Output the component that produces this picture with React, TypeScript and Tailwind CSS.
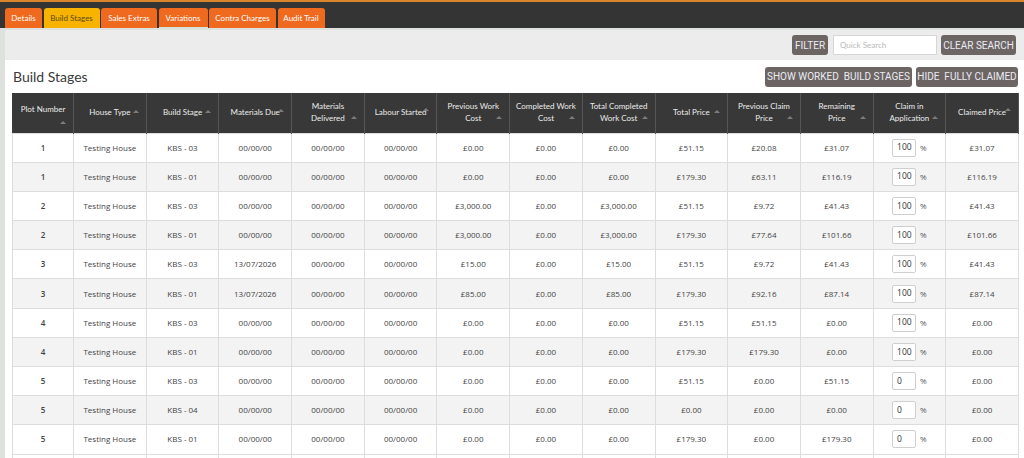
import React from 'react';

type Row = {
  plot: string;
  stage: string;
  due: string;
  prev: string;
  completed: string;
  totalCompleted: string;
  total: string;
  prevClaim: string;
  remaining: string;
  claim: string;
  claimed: string;
};

const rows: Row[] = [
  { plot: '1', stage: 'KBS - 03', due: '00/00/00', prev: '£0.00', completed: '£0.00', totalCompleted: '£0.00', total: '£51.15', prevClaim: '£20.08', remaining: '£31.07', claim: '100', claimed: '£31.07' },
  { plot: '1', stage: 'KBS - 01', due: '00/00/00', prev: '£0.00', completed: '£0.00', totalCompleted: '£0.00', total: '£179.30', prevClaim: '£63.11', remaining: '£116.19', claim: '100', claimed: '£116.19' },
  { plot: '2', stage: 'KBS - 03', due: '00/00/00', prev: '£3,000.00', completed: '£0.00', totalCompleted: '£3,000.00', total: '£51.15', prevClaim: '£9.72', remaining: '£41.43', claim: '100', claimed: '£41.43' },
  { plot: '2', stage: 'KBS - 01', due: '00/00/00', prev: '£3,000.00', completed: '£0.00', totalCompleted: '£3,000.00', total: '£179.30', prevClaim: '£77.64', remaining: '£101.66', claim: '100', claimed: '£101.66' },
  { plot: '3', stage: 'KBS - 03', due: '13/07/2026', prev: '£15.00', completed: '£0.00', totalCompleted: '£15.00', total: '£51.15', prevClaim: '£9.72', remaining: '£41.43', claim: '100', claimed: '£41.43' },
  { plot: '3', stage: 'KBS - 01', due: '13/07/2026', prev: '£85.00', completed: '£0.00', totalCompleted: '£85.00', total: '£179.30', prevClaim: '£92.16', remaining: '£87.14', claim: '100', claimed: '£87.14' },
  { plot: '4', stage: 'KBS - 03', due: '00/00/00', prev: '£0.00', completed: '£0.00', totalCompleted: '£0.00', total: '£51.15', prevClaim: '£51.15', remaining: '£0.00', claim: '100', claimed: '£0.00' },
  { plot: '4', stage: 'KBS - 01', due: '00/00/00', prev: '£0.00', completed: '£0.00', totalCompleted: '£0.00', total: '£179.30', prevClaim: '£179.30', remaining: '£0.00', claim: '100', claimed: '£0.00' },
  { plot: '5', stage: 'KBS - 03', due: '00/00/00', prev: '£0.00', completed: '£0.00', totalCompleted: '£0.00', total: '£51.15', prevClaim: '£0.00', remaining: '£51.15', claim: '0', claimed: '£0.00' },
  { plot: '5', stage: 'KBS - 04', due: '00/00/00', prev: '£0.00', completed: '£0.00', totalCompleted: '£0.00', total: '£0.00', prevClaim: '£0.00', remaining: '£0.00', claim: '0', claimed: '£0.00' },
  { plot: '5', stage: 'KBS - 01', due: '00/00/00', prev: '£0.00', completed: '£0.00', totalCompleted: '£0.00', total: '£179.30', prevClaim: '£0.00', remaining: '£179.30', claim: '0', claimed: '£0.00' },
];

// label, arrow top offset (px)
const columns: { label: React.ReactNode; arrowTop: number }[] = [
  { label: 'Plot Number', arrowTop: 28 },
  { label: 'House Type', arrowTop: 17 },
  { label: 'Build Stage', arrowTop: 17 },
  { label: 'Materials Due', arrowTop: 16 },
  { label: <>Materials<br />Delivered</>, arrowTop: 23 },
  { label: 'Labour Started', arrowTop: 15 },
  { label: <>Previous Work<br />Cost</>, arrowTop: 23 },
  { label: <>Completed Work<br />Cost</>, arrowTop: 23 },
  { label: <>Total Completed<br />Work Cost</>, arrowTop: 23 },
  { label: 'Total Price', arrowTop: 17 },
  { label: <>Previous Claim<br />Price</>, arrowTop: 23 },
  { label: <>Remaining<br />Price</>, arrowTop: 23 },
  { label: <>Claim in<br />Application</>, arrowTop: 23 },
  { label: 'Claimed Price', arrowTop: 15 },
];

const tabs = [
  { label: 'Details', w: 'w-[37px]' },
  { label: 'Build Stages', w: 'w-[56px]', active: true },
  { label: 'Sales Extras', w: 'w-[56px]' },
  { label: 'Variations', w: 'w-[49px]', underline: true },
  { label: 'Contra Charges', w: 'w-[67px]' },
  { label: 'Audit Trail', w: 'w-[47px]' },
];

function SortArrow({ top }: { top: number }) {
  return (
    <span
      className="absolute right-[7px] w-0 h-0 border-l-[3px] border-r-[3px] border-b-[3px] border-l-transparent border-r-transparent border-b-[#7c7c7c]"
      style={{ top }}
    />
  );
}

function GreyButton({ children, width }: { children: React.ReactNode; width: string }) {
  return (
    <button
      className={`${width} h-[20px] rounded-[3px] bg-[#6d6464] text-[#e9ecf2] text-[10px] font-normal flex items-center justify-center whitespace-pre`}
      style={{ fontFamily: 'Roboto, "Liberation Sans", sans-serif' }}
    >
      {children}
    </button>
  );
}

export default function App() {
  return (
    <div className="w-[1024px] h-[458px] overflow-hidden bg-[#dde2de] relative" style={{ fontFamily: 'Lato, "Open Sans", sans-serif' }}>
      <div className="h-[2px] bg-[#d8862c]" />
      <div className="h-[26px] bg-[#343434] flex items-end pl-[5px] gap-[1.5px]">
        {tabs.map((t) => (
          <div
            key={t.label}
            className={`${t.w} h-[20px] rounded-t-[3px] flex items-center justify-center text-[8px] ${
              t.active ? 'bg-[#f7b300] text-[#5e4a10]' : 'bg-[#ef6a1f] text-white'
            } ${t.underline ? 'border-b border-[#cfe0d4]' : ''}`}
          >
            {t.label}
          </div>
        ))}
      </div>

      <div className="ml-[5px] mt-[2px] bg-white h-full">
        <div className="h-[30px] bg-[#ececec] flex items-center justify-end gap-[4px] pr-[8px]">
          <GreyButton width="w-[36px]">FILTER</GreyButton>
          <div className="w-[104px] h-[20px] bg-white border border-[#d6d6d6] flex items-center px-[6px] text-[8px] text-[#b8b8b8] ml-[1px]">
            Quick Search
          </div>
          <GreyButton width="w-[75px]">CLEAR SEARCH</GreyButton>
        </div>

        <div className="pl-[7px] pr-[6px]">
          <div className="h-[33px] flex items-center justify-between">
            <h1 className="text-[14px] text-[#3a3a3a] pl-[1px]">Build Stages</h1>
            <div className="flex gap-[4px]">
              <GreyButton width="w-[147px]">SHOW WORKED  BUILD STAGES</GreyButton>
              <GreyButton width="w-[102px]">HIDE  FULLY CLAIMED</GreyButton>
            </div>
          </div>

          <table className="w-[1006px] table-fixed border-collapse border-l border-l-[#3a3a3a]">
            <colgroup>
              <col className="w-[61px]" />
              {columns.slice(1).map((_, i) => (
                <col key={i} className="w-[72.7px]" />
              ))}
            </colgroup>
            <thead>
              <tr className="h-[40px] bg-[#383838]">
                {columns.map((c, i) => (
                  <th
                    key={i}
                    className="relative border-r border-[#555555] text-[8px] font-normal leading-[12px] text-[#ececec] text-center px-[4px] pb-[1px]"
                  >
                    <span className={i === 0 ? 'relative -top-[3px]' : ''}>{c.label}</span>
                    <SortArrow top={c.arrowTop} />
                  </th>
                ))}
              </tr>
            </thead>
            <tbody style={{ fontFamily: '"Open Sans", "Noto Sans", sans-serif' }}>
              {rows.map((r, i) => (
                <tr key={i} className={`h-[29.2px] text-[8px] text-[#444] ${i % 2 === 1 ? 'bg-[#f3f3f3]' : 'bg-white'}`}>
                  <td className="border border-[#dddddd] text-center font-semibold">{r.plot}</td>
                  <td className="border border-[#dddddd] text-center">Testing House</td>
                  <td className="border border-[#dddddd] text-center">{r.stage}</td>
                  <td className="border border-[#dddddd] text-center">{r.due}</td>
                  <td className="border border-[#dddddd] text-center">00/00/00</td>
                  <td className="border border-[#dddddd] text-center">00/00/00</td>
                  <td className="border border-[#dddddd] text-center">{r.prev}</td>
                  <td className="border border-[#dddddd] text-center">{r.completed}</td>
                  <td className="border border-[#dddddd] text-center">{r.totalCompleted}</td>
                  <td className="border border-[#dddddd] text-center">{r.total}</td>
                  <td className="border border-[#dddddd] text-center">{r.prevClaim}</td>
                  <td className="border border-[#dddddd] text-center">{r.remaining}</td>
                  <td className="border border-[#dddddd]">
                    <div className="flex items-center justify-center gap-[4px]">
                      <div className="w-[24px] h-[18px] bg-white border border-[#cfcfcf] rounded-[2px] flex items-center pl-[4px] text-[8.5px] text-[#333]">
                        {r.claim}
                      </div>
                      <span className="text-[8px] text-[#555]">%</span>
                    </div>
                  </td>
                  <td className="border border-[#dddddd] text-center">{r.claimed}</td>
                </tr>
              ))}
              <tr className="h-[29px] bg-white">
                {columns.map((_, i) => (
                  <td key={i} className="border border-[#dddddd]" />
                ))}
              </tr>
            </tbody>
          </table>
        </div>
      </div>
    </div>
  );
}
